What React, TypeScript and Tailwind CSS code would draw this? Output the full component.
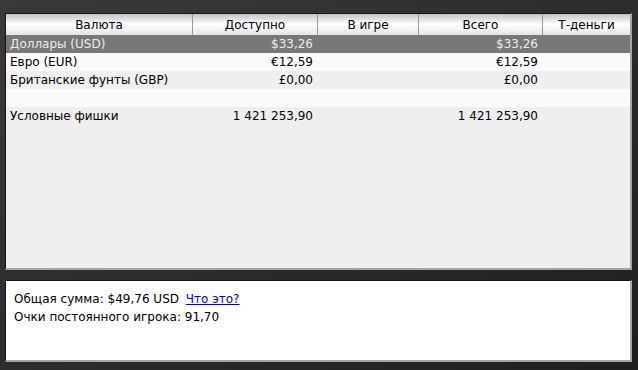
import React from 'react';

interface Row {
  name: string;
  available: string;
  inGame: string;
  total: string;
  tMoney: string;
  selected?: boolean;
}

const rows: Row[] = [
  { name: 'Доллары (USD)', available: '$33,26', inGame: '', total: '$33,26', tMoney: '', selected: true },
  { name: 'Евро (EUR)', available: '€12,59', inGame: '', total: '€12,59', tMoney: '' },
  { name: 'Британские фунты (GBP)', available: '£0,00', inGame: '', total: '£0,00', tMoney: '' },
  { name: '', available: '', inGame: '', total: '', tMoney: '' },
  { name: 'Условные фишки', available: '1 421 253,90', inGame: '', total: '1 421 253,90', tMoney: '' },
];

const cols = 'grid grid-cols-[186px_125px_101px_124px_1fr]';

export default function App() {
  return (
    <div className="w-[638px] h-[370px] bg-gradient-to-br from-[#3a3a3a] to-[#1f1f1f] pt-[13px] pl-[5px] pr-[6px] font-['DejaVu_Sans',sans-serif] text-[12px] text-black">
      {/* balances table */}
      <div className="h-[257px] bg-[#efefef] border-t border-l border-[#151515] border-r-2 border-b-2 border-r-[#a4a4a4] border-b-[#a4a4a4] overflow-hidden">
        <div className={`${cols} h-[21px] bg-gradient-to-b from-[#c4c4c4] via-white to-[#e4e4e4]`}>
          {['Валюта', 'Доступно', 'В игре', 'Всего', 'Т-деньги'].map((h, i) => (
            <div
              key={h}
              className={`flex items-center justify-center leading-none pt-[1px] ${i > 0 ? 'border-l border-[#9a9a9a]' : ''}`}
            >
              {h}
            </div>
          ))}
        </div>
        {rows.map((r, i) => (
          <div
            key={i}
            className={`${cols} h-[18px] items-center leading-none ${
              r.selected ? 'bg-[#787878] text-[#ececec]' : i % 2 === 1 ? 'bg-[#fafafa]' : 'bg-[#efefef]'
            }`}
          >
            <div className="pl-[4px] whitespace-nowrap">{r.name}</div>
            <div className="text-right pr-[4px]">{r.available}</div>
            <div className="text-right pr-[4px]">{r.inGame}</div>
            <div className="text-right pr-[4px]">{r.total}</div>
            <div className="text-right pr-[4px]">{r.tMoney}</div>
          </div>
        ))}
      </div>

      {/* summary */}
      <div className="mt-[10px] h-[82px] bg-white border-t border-l border-[#151515] border-r-2 border-b-2 border-r-[#a4a4a4] border-b-[#a4a4a4] pl-[8px] pt-[9px] leading-[18px]">
        <div>
          Общая сумма: $49,76 USD{' '}
          <a href="#" className="ml-[3px] text-[#0000ee] underline">
            Что это?
          </a>
        </div>
        <div>Очки постоянного игрока: 91,70</div>
      </div>
    </div>
  );
}
